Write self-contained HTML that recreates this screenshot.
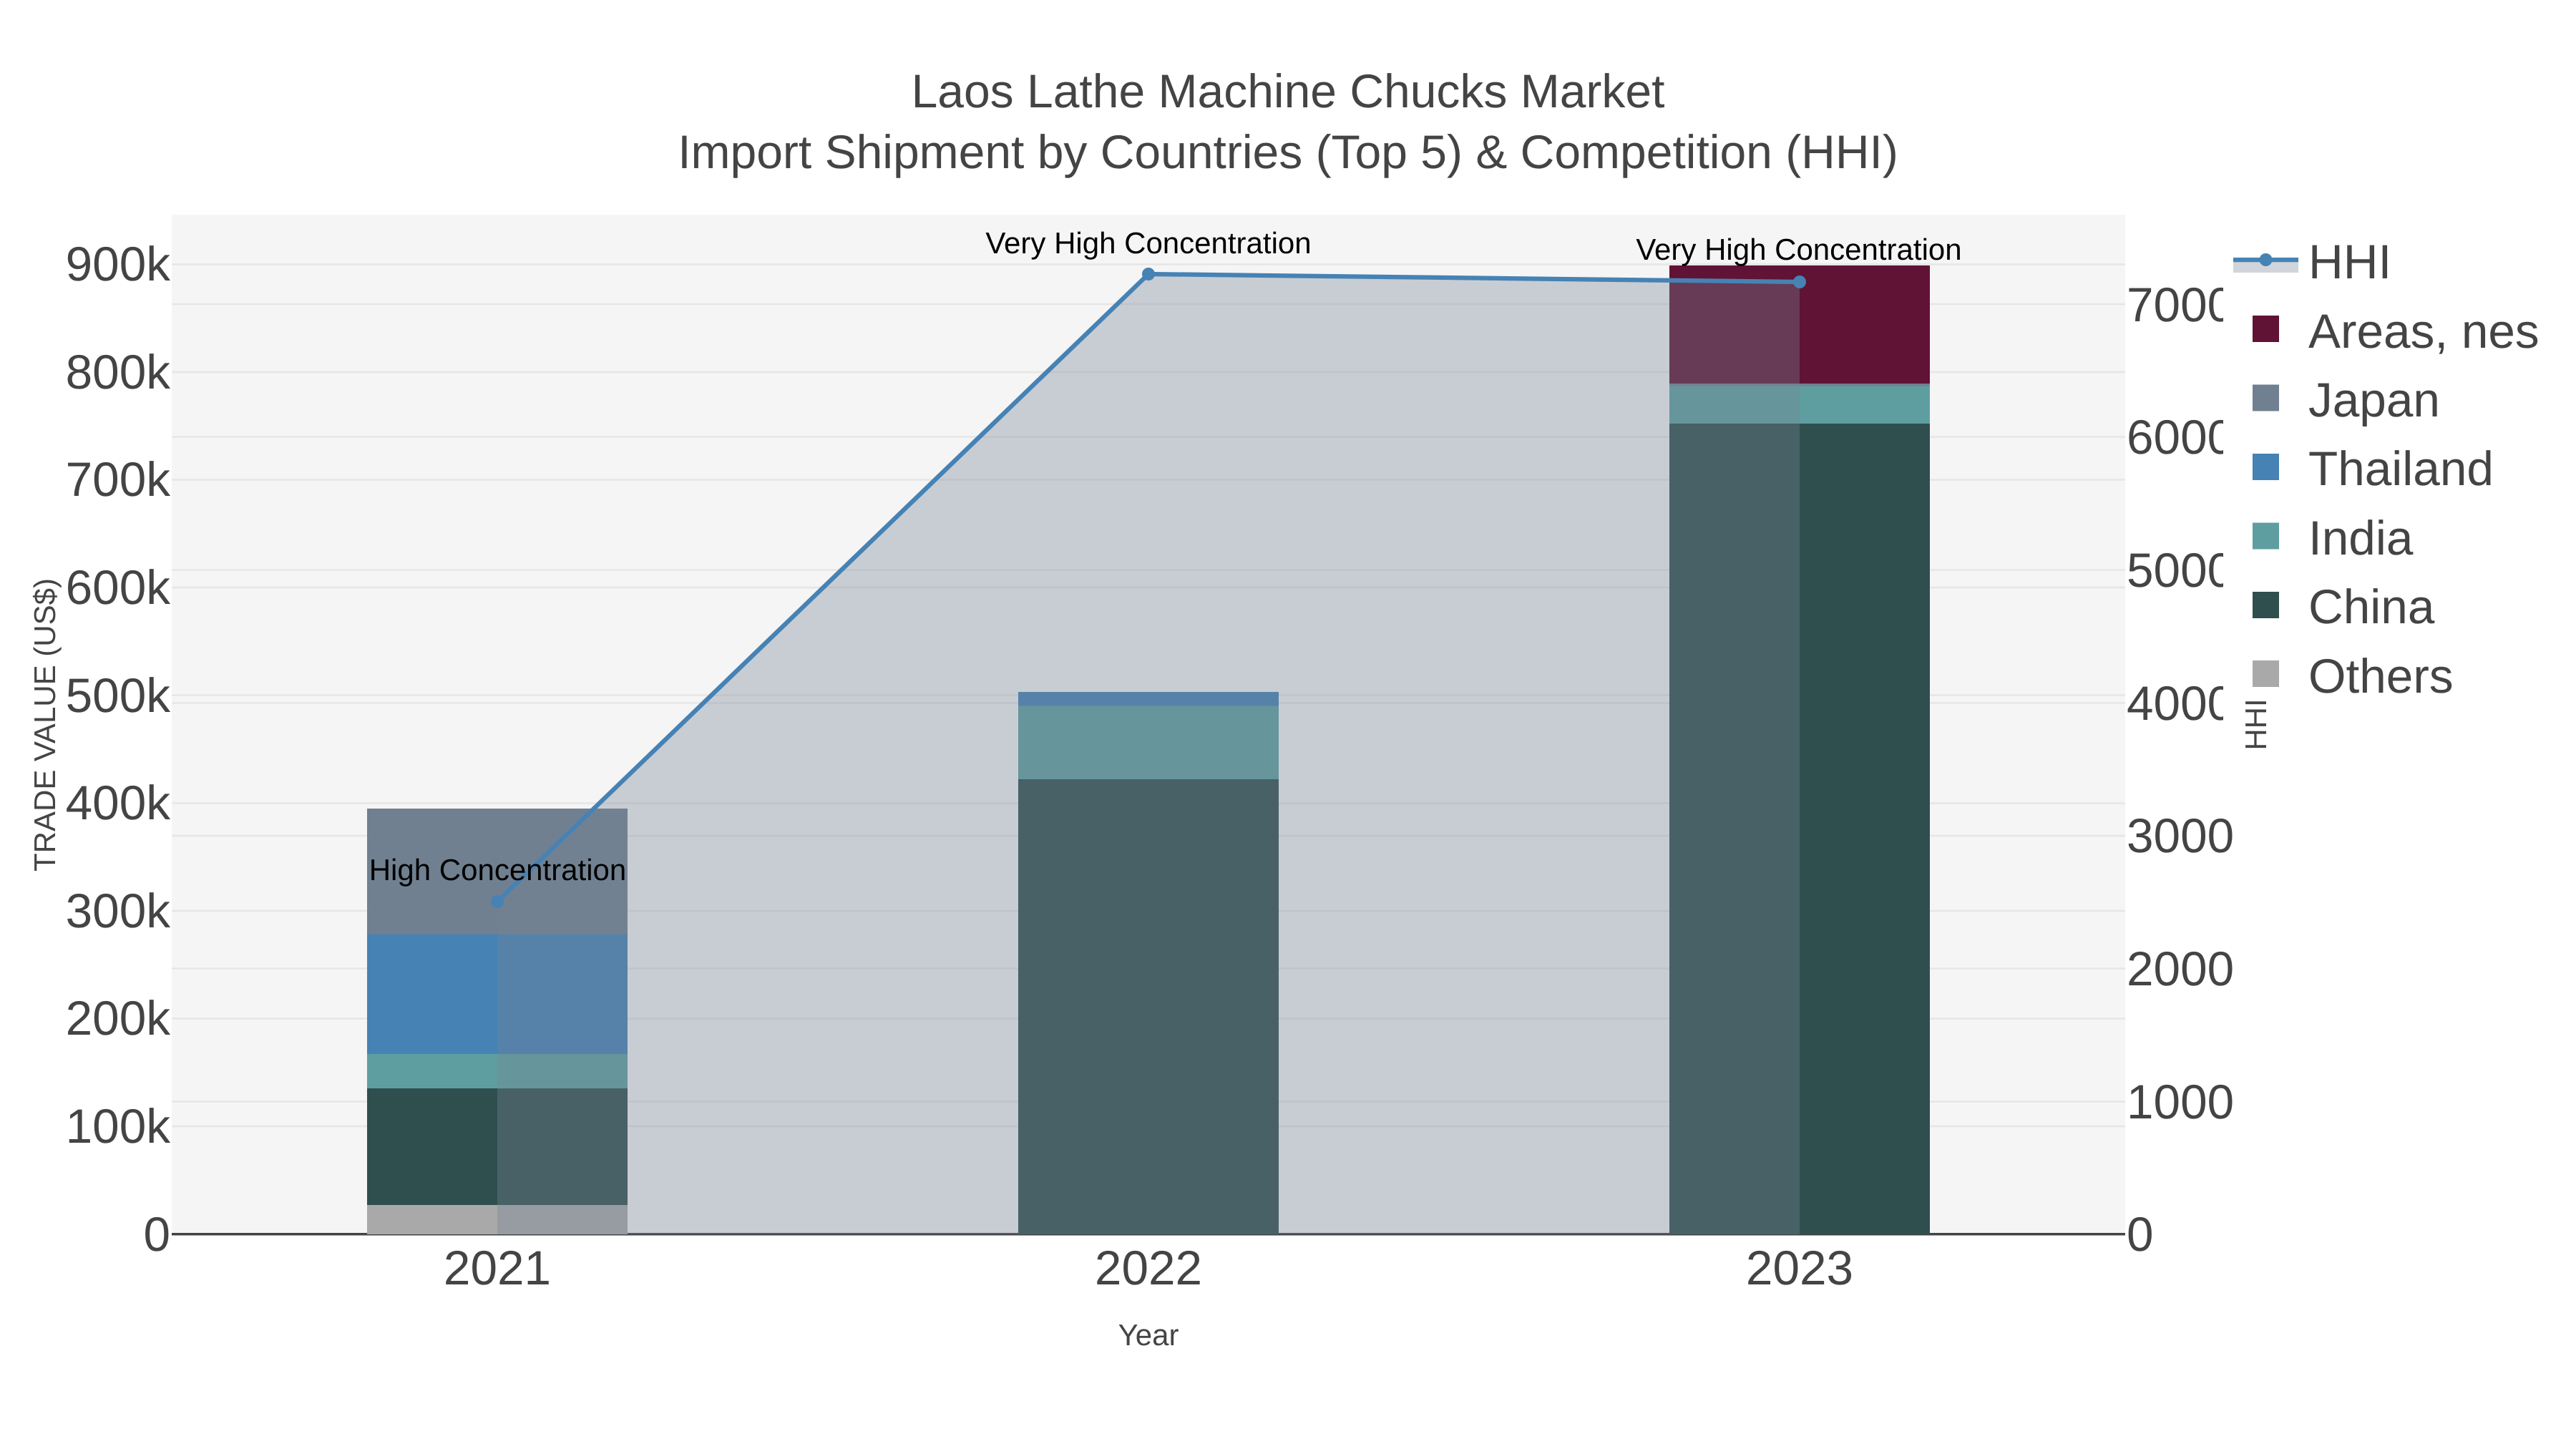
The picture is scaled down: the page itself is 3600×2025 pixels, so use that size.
<!DOCTYPE html>
<html lang="en">
<head>
<meta charset="utf-8">
<title>Laos Lathe Machine Chucks Market</title>
<style>
html,body{margin:0;padding:0;background:#fff;width:3600px;height:2025px;overflow:hidden}
svg{display:block}
text{font-family:"Liberation Sans",Arial,sans-serif;fill:#444;text-rendering:geometricPrecision}
.t{font-size:67.5px}
.a{font-size:42px;fill:#000;text-anchor:middle}
.g{stroke:#e6e6e6;stroke-width:2.5;fill:none}
</style>
</head>
<body>
<svg xmlns="http://www.w3.org/2000/svg" width="3600" height="2025" viewBox="0 0 3600 2025">
<rect x="0" y="0" width="3600" height="2025" fill="#fff"/>
<rect x="240" y="300" width="2730" height="1425" fill="#f5f5f5"/>
<g class="g">
<path d="M240 369.5H2970M240 520H2970M240 670.5H2970M240 821H2970M240 971.5H2970M240 1122.5H2970M240 1273H2970M240 1423.5H2970M240 1574H2970"/>
<path d="M240 425H2970M240 610.5H2970M240 796.5H2970M240 982.5H2970M240 1168H2970M240 1353.5H2970M240 1539.5H2970"/>
</g>
<rect x="240" y="1723" width="2730" height="3.5" fill="#444"/>
<!-- 2021 -->
<rect x="513" y="1684" width="364" height="41" fill="#a9a9a9"/>
<rect x="513" y="1521" width="364" height="163" fill="#2f4f4f"/>
<rect x="513" y="1473" width="364" height="48" fill="#5f9ea0"/>
<rect x="513" y="1305.5" width="364" height="167.5" fill="#4682b4"/>
<rect x="513" y="1130" width="364" height="175.5" fill="#708090"/>
<!-- 2022 -->
<rect x="1423" y="1089" width="364" height="636" fill="#2f4f4f"/>
<rect x="1423" y="986.5" width="364" height="102.5" fill="#5f9ea0"/>
<rect x="1423" y="967" width="364" height="19.5" fill="#4682b4"/>
<!-- 2023 -->
<rect x="2333" y="592" width="364" height="1133" fill="#2f4f4f"/>
<rect x="2333" y="539.5" width="364" height="52.5" fill="#5f9ea0"/>
<rect x="2333" y="536" width="364" height="3.5" fill="#708090"/>
<rect x="2333" y="371" width="364" height="165" fill="#601335"/>
<!-- HHI -->
<polygon points="695,1725 695,1260 1605,383 2515,394 2515,1725" fill="rgb(118,131,148)" fill-opacity="0.35"/>
<polyline points="695,1260 1605,383 2515,394" fill="none" stroke="#4682b4" stroke-width="6.25"/>
<circle cx="695" cy="1260" r="9" fill="#4682b4"/>
<circle cx="1605" cy="383" r="9" fill="#4682b4"/>
<circle cx="2515" cy="394" r="9" fill="#4682b4"/>
<!-- annotations -->
<text class="a" x="695.5" y="1230">High Concentration</text>
<text class="a" x="1605" y="354">Very High Concentration</text>
<text class="a" x="2514" y="363">Very High Concentration</text>
<!-- left ticks -->
<g class="t" text-anchor="end">
<text x="238" y="392">900k</text>
<text x="238" y="543">800k</text>
<text x="238" y="693">700k</text>
<text x="238" y="844">600k</text>
<text x="238" y="995">500k</text>
<text x="238" y="1145">400k</text>
<text x="238" y="1296">300k</text>
<text x="238" y="1446">200k</text>
<text x="238" y="1597">100k</text>
<text x="238" y="1748">0</text>
</g>
<!-- right ticks -->
<g class="t">
<text x="2972" y="449">7000</text>
<text x="2972" y="634">6000</text>
<text x="2972" y="820">5000</text>
<text x="2972" y="1006">4000</text>
<text x="2972" y="1191">3000</text>
<text x="2972" y="1377">2000</text>
<text x="2972" y="1563">1000</text>
<text x="2972" y="1748">0</text>
</g>
<!-- x ticks -->
<g class="t" text-anchor="middle">
<text x="695" y="1795">2021</text>
<text x="1605" y="1795">2022</text>
<text x="2515" y="1795">2023</text>
</g>
<text x="1605" y="1880" font-size="42" text-anchor="middle">Year</text>
<text transform="translate(77 1013) rotate(-90)" font-size="42" text-anchor="middle">TRADE VALUE (US$)</text>
<!-- title -->
<text x="1800" y="150" font-size="66" text-anchor="middle">Laos Lathe Machine Chucks Market</text>
<text x="1800" y="235" font-size="66" text-anchor="middle">Import Shipment by Countries (Top 5) &amp; Competition (HHI)</text>
<!-- legend -->
<rect x="3107" y="340" width="493" height="672" fill="#fff"/>
<text transform="translate(3167 1012.5) rotate(-90)" font-size="42" text-anchor="middle">HHI</text>
<rect x="3121" y="363" width="91" height="18" fill="#d0d5db"/>
<rect x="3121" y="360" width="91" height="6.25" fill="#4682b4"/>
<circle cx="3166.5" cy="363" r="9" fill="#4682b4"/>
<rect x="3148" y="441" width="37" height="37" fill="#601335"/>
<rect x="3148" y="537.5" width="37" height="37" fill="#708090"/>
<rect x="3148" y="634" width="37" height="37" fill="#4682b4"/>
<rect x="3148" y="730.5" width="37" height="37" fill="#5f9ea0"/>
<rect x="3148" y="827" width="37" height="37" fill="#2f4f4f"/>
<rect x="3148" y="923" width="37" height="37" fill="#a9a9a9"/>
<g class="t">
<text x="3226" y="389">HHI</text>
<text x="3226" y="486">Areas, nes</text>
<text x="3226" y="582">Japan</text>
<text x="3226" y="678">Thailand</text>
<text x="3226" y="775">India</text>
<text x="3226" y="871">China</text>
<text x="3226" y="968">Others</text>
</g>
</svg>
</body>
</html>
